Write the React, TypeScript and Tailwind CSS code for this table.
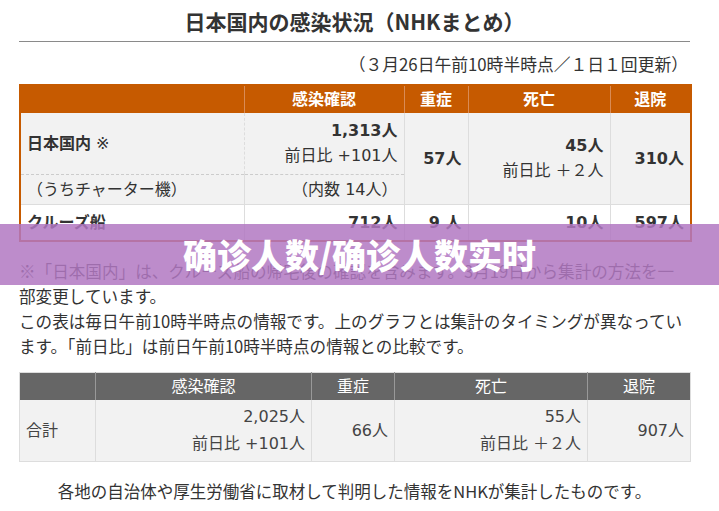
export default function App() {
  const cell = "border-l border-[#ddd] px-[6px] align-middle";
  return (
    <div className="relative w-[719px] h-[511px] overflow-hidden bg-white text-[#333] font-['DejaVu_Sans','Noto_Sans_CJK_JP',sans-serif]">
      <div className="pl-[19px] pr-[29px]">
        {/* Title */}
        <h1 className="h-[42px] pt-[6px] text-center text-[21px] font-bold leading-[30px] border-b border-[#8a8a8a] font-['Noto_Sans_CJK_JP',sans-serif]">
          日本国内の感染状況（NHKまとめ）
        </h1>
        <div className="mt-[10px] pr-[2px] text-right text-[16.8px] leading-[24px] font-['Noto_Sans_CJK_JP',sans-serif]">
          （３月26日午前10時半時点／１日１回更新）
        </div>

        {/* Breakdown table */}
        <table className="mt-[8px] w-full table-fixed border-collapse border-2 border-[#c65a00] text-[16px] leading-[25px]">
          <colgroup>
            <col className="w-[224px]" />
            <col className="w-[160px]" />
            <col className="w-[64px]" />
            <col className="w-[142px]" />
            <col className="w-[81px]" />
          </colgroup>
          <thead>
            <tr className="h-[28px] bg-[#c65a00] text-white font-bold">
              <th className="p-0"></th>
              <th className="p-0 border-l border-[#d98b55]">感染確認</th>
              <th className="p-0 border-l border-[#d98b55]">重症</th>
              <th className="p-0 border-l border-[#d98b55]">死亡</th>
              <th className="p-0 border-l border-[#d98b55]">退院</th>
            </tr>
          </thead>
          <tbody className="bg-[#f2f2f2]">
            <tr className="h-[61px]">
              <td className="px-[6px] align-middle border-b border-dashed border-[#ccc]">
                <span className="font-bold">日本国内</span> ※
              </td>
              <td className={`${cell} text-right border-b border-dashed border-b-[#ccc]`}>
                <div className="font-bold">1,313人</div>
                <div>前日比 +101人</div>
              </td>
              <td rowSpan={2} className={`${cell} text-right font-bold`}>57人</td>
              <td rowSpan={2} className={`${cell} text-right`}>
                <div className="font-bold">45人</div>
                <div>前日比 ＋２人</div>
              </td>
              <td rowSpan={2} className={`${cell} text-right font-bold`}>310人</td>
            </tr>
            <tr className="h-[30px]">
              <td className="px-[6px] align-middle">（うちチャーター機）</td>
              <td className={`${cell} text-right`}>（内数 14人）</td>
            </tr>
            <tr className="h-[37px] bg-white font-bold border-t border-[#ddd]">
              <td className="px-[6px] align-middle">クルーズ船</td>
              <td className={`${cell} text-right`}>712人</td>
              <td className={`${cell} text-right`}>9 人</td>
              <td className={`${cell} text-right`}>10人</td>
              <td className={`${cell} text-right`}>597人</td>
            </tr>
          </tbody>
        </table>

        {/* Notes */}
        <p className="mt-[17px] whitespace-nowrap text-[16.6px] leading-[25px] font-['Noto_Sans_CJK_JP',sans-serif]">
          ※「日本国内」は、クルーズ船の帰宅後の確認を含みます。3月19日から集計の方法を一
          <br />
          部変更しています。
          <br />
          この表は毎日午前10時半時点の情報です。上のグラフとは集計のタイミングが異なってい
          <br />
          ます。「前日比」は前日午前10時半時点の情報との比較です。
        </p>

        {/* Totals table */}
        <table className="mt-[13px] w-full table-fixed border-collapse border border-[#ddd] text-[16px] leading-[27px] text-[#444]">
          <colgroup>
            <col className="w-[76px]" />
            <col className="w-[216px]" />
            <col className="w-[83px]" />
            <col className="w-[193px]" />
            <col className="w-[103px]" />
          </colgroup>
          <thead>
            <tr className="h-[26px] bg-[#666] text-white">
              <th className="p-0 font-normal"></th>
              <th className="p-0 font-normal border-l border-[#999]">感染確認</th>
              <th className="p-0 font-normal border-l border-[#999]">重症</th>
              <th className="p-0 font-normal border-l border-[#999]">死亡</th>
              <th className="p-0 font-normal border-l border-[#999]">退院</th>
            </tr>
          </thead>
          <tbody className="bg-[#f2f2f2]">
            <tr className="h-[61px]">
              <td className="px-[6px] align-middle">合計</td>
              <td className={`${cell} text-right`}>
                <div>2,025人</div>
                <div>前日比 +101人</div>
              </td>
              <td className={`${cell} text-right`}>66人</td>
              <td className={`${cell} text-right`}>
                <div>55人</div>
                <div>前日比 ＋２人</div>
              </td>
              <td className={`${cell} text-right`}>907人</td>
            </tr>
          </tbody>
        </table>

        <p className="mt-[17px] text-center text-[16.5px] leading-[25px] font-['Noto_Sans_CJK_JP',sans-serif]">
          各地の自治体や厚生労働省に取材して判明した情報をNHKが集計したものです。
        </p>
      </div>

      {/* Overlay banner */}
      <div className="absolute left-0 right-0 top-[224px] h-[61px] flex items-center justify-center bg-[rgba(178,120,194,0.85)]">
        <span className="text-white text-[34px] font-black leading-none font-['Noto_Sans_CJK_SC',sans-serif]">
          确诊人数/确诊人数实时
        </span>
      </div>
    </div>
  );
}
